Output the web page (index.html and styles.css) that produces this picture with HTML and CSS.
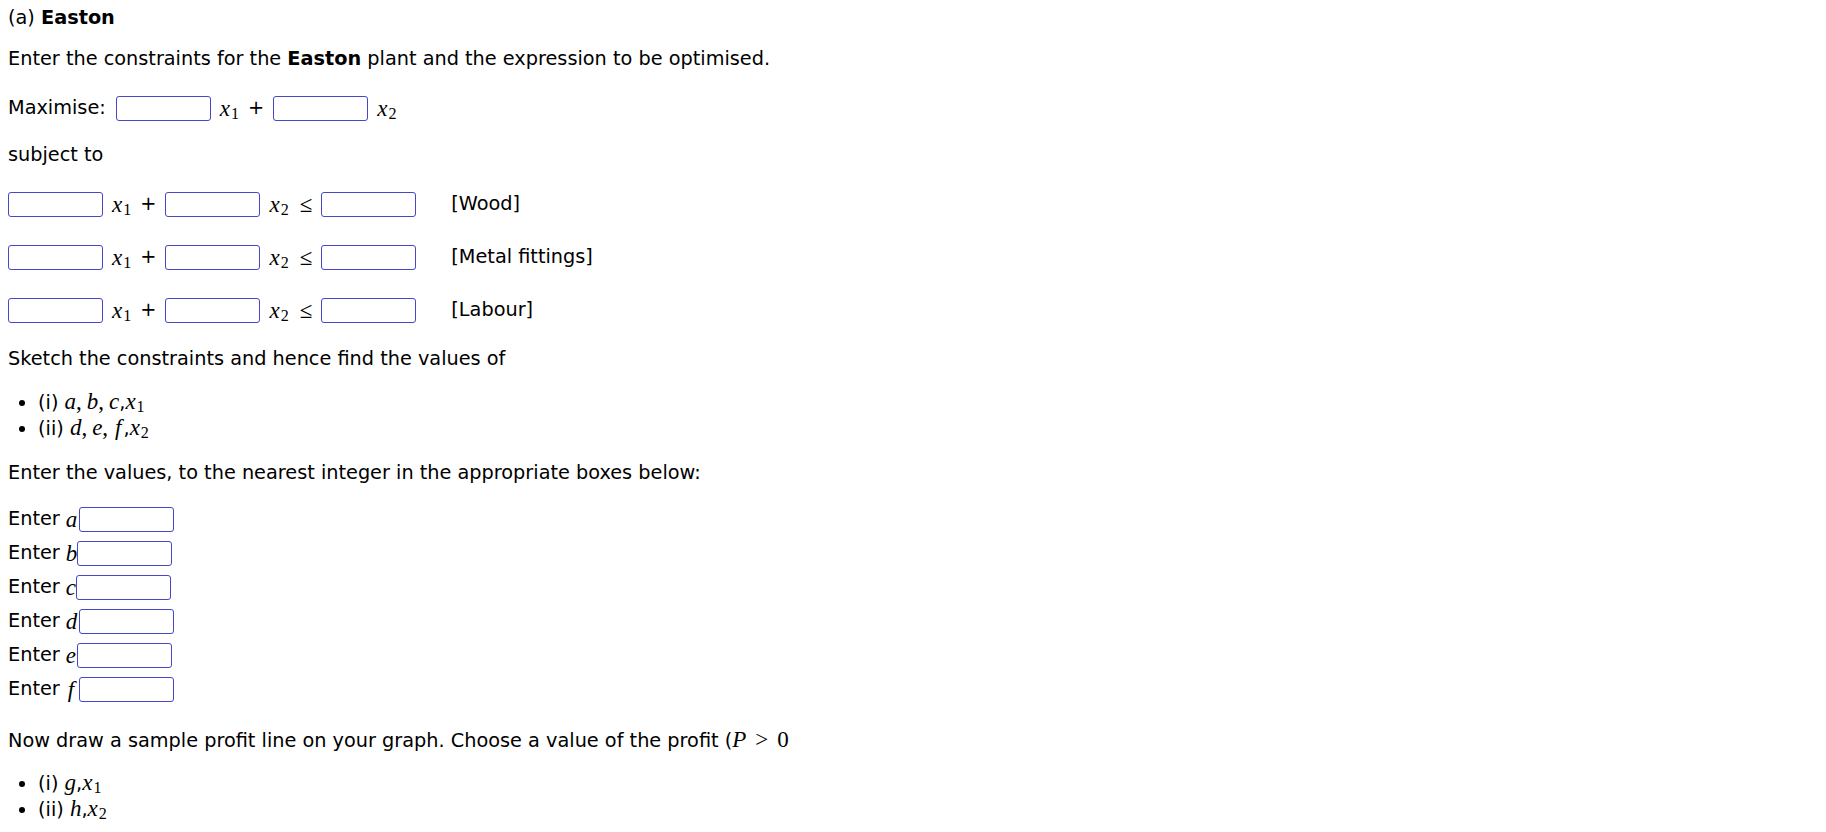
FILE: index.html
```html
<!DOCTYPE html>
<html lang="en">
<head>
<meta charset="utf-8">
<title>Easton</title>
<link rel="stylesheet" href="styles.css">
</head>
<body>
<div class="question">
  <p class="title">(a) <b>Easton</b></p>
  <p class="intro">Enter the constraints for the <b>Easton</b> plant and the expression to be optimised.</p>

  <div class="row max-row">
    <span class="lead">Maximise:</span>
    <input class="box" type="text">
    <span class="m"><i>x</i><sub>1</sub></span>
    <span class="op">+</span>
    <input class="box" type="text">
    <span class="m"><i>x</i><sub>2</sub></span>
  </div>

  <p class="subject">subject to</p>

  <div class="row con-row first">
    <input class="box" type="text">
    <span class="m"><i>x</i><sub>1</sub></span>
    <span class="op">+</span>
    <input class="box" type="text">
    <span class="m"><i>x</i><sub>2</sub></span>
    <span class="rel">≤</span>
    <input class="box" type="text">
    <span class="label">[Wood]</span>
  </div>
  <div class="row con-row">
    <input class="box" type="text">
    <span class="m"><i>x</i><sub>1</sub></span>
    <span class="op">+</span>
    <input class="box" type="text">
    <span class="m"><i>x</i><sub>2</sub></span>
    <span class="rel">≤</span>
    <input class="box" type="text">
    <span class="label">[Metal fittings]</span>
  </div>
  <div class="row con-row">
    <input class="box" type="text">
    <span class="m"><i>x</i><sub>1</sub></span>
    <span class="op">+</span>
    <input class="box" type="text">
    <span class="m"><i>x</i><sub>2</sub></span>
    <span class="rel">≤</span>
    <input class="box" type="text">
    <span class="label">[Labour]</span>
  </div>

  <p class="sketch">Sketch the constraints and hence find the values of</p>
  <ul class="parts">
    <li>(i) <span class="m"><i>a</i><span class="sep">,</span><i>b</i><span class="sep">,</span><i>c</i></span>,<span class="m"><i>x</i><sub>1</sub></span></li>
    <li>(ii) <span class="m"><i>d</i><span class="sep">,</span><i>e</i><span class="sep">,</span><i class="wide">f</i></span>,<span class="m"><i>x</i><sub>2</sub></span></li>
  </ul>

  <p class="values">Enter the values, to the nearest integer in the appropriate boxes below:</p>
  <div class="answers">
    <div class="enter"><span class="word">Enter</span><span class="m var-a"><i>a</i></span><input class="box" type="text"></div>
    <div class="enter"><span class="word">Enter</span><span class="m var-b"><i>b</i></span><input class="box" type="text"></div>
    <div class="enter"><span class="word">Enter</span><span class="m var-c"><i>c</i></span><input class="box" type="text"></div>
    <div class="enter"><span class="word">Enter</span><span class="m var-d"><i>d</i></span><input class="box" type="text"></div>
    <div class="enter"><span class="word">Enter</span><span class="m var-e"><i>e</i></span><input class="box" type="text"></div>
    <div class="enter"><span class="word">Enter</span><span class="m var-f"><i>f</i></span><input class="box" type="text"></div>
  </div>

  <p class="profit">Now draw a sample profit line on your graph. Choose a value of the profit (<span class="m"><i>P</i><span class="gt">&gt;</span><span class="num">0</span></span></p>
  <ul class="parts last">
    <li>(i) <span class="m"><i>g</i></span>,<span class="m"><i>x</i><sub>1</sub></span></li>
    <li>(ii) <span class="m"><i>h</i></span>,<span class="m"><i>x</i><sub>2</sub></span></li>
  </ul>
</div>
</body>
</html>
```

FILE: styles.css
```css
html, body {
  margin: 0;
  padding: 0;
  background: #ffffff;
}

.question {
  padding: 8px;
  font-family: Verdana, "DejaVu Sans", sans-serif;
  font-size: 19.3px;
  line-height: 20px;
  color: #000000;
}

.question p {
  margin: 0;
}

.title {
  height: 20px;
}

.intro {
  margin-top: 21px !important;
}

.row {
  display: flex;
  align-items: center;
  gap: 9px;
  height: 26px;
}

.max-row {
  margin-top: 26px;
}

.lead {
  margin-right: 1px;
}

.subject {
  margin-top: 24px !important;
}

.con-row {
  margin-top: 27px;
}

.con-row.first {
  margin-top: 26px;
}

.sketch {
  margin-top: 26px !important;
}

.values {
  margin-top: 21px !important;
}

.profit {
  margin-top: 26px !important;
}

.box {
  box-sizing: border-box;
  width: 95px;
  height: 25px;
  margin: 0;
  padding: 0 4px;
  border: 1px solid #4646c8;
  border-radius: 3px;
  background: #ffffff;
  font: inherit;
  font-size: 16px;
}

.m {
  font-family: "Liberation Serif", "DejaVu Serif", serif;
  font-size: 23px;
  line-height: 1;
  white-space: nowrap;
}

.m i {
  font-style: italic;
}

.m sub {
  font-size: 0.7em;
  font-style: normal;
  vertical-align: -0.2em;
  line-height: 0;
  margin-left: 1px;
}

.sep {
  margin-right: 5px;
}

.wide {
  padding: 0 2px;
}

.rel {
  font-family: "Liberation Serif", "DejaVu Serif", serif;
  font-size: 23px;
  line-height: 1;
  margin-left: 2px;
}

.label {
  margin-left: 26px;
}

.parts {
  margin: 21px 0 0 0;
  padding-left: 30px;
  list-style: disc;
}

.parts li {
  height: 26px;
  line-height: 26px;
}

.parts.last {
  margin-top: 20px;
}

.answers {
  margin-top: 23px;
  display: flex;
  flex-direction: column;
  gap: 8px;
}

.enter {
  display: flex;
  align-items: center;
  height: 26px;
}

.enter .word {
  margin-right: 6px;
}

.var-a,
.var-d {
  padding-right: 2px;
}

.var-e {
  padding-right: 1px;
}

.var-f {
  padding-left: 2px;
  padding-right: 5px;
}

.gt {
  font-style: normal;
  margin: 0 9px;
}

.num {
  font-style: normal;
}
```
